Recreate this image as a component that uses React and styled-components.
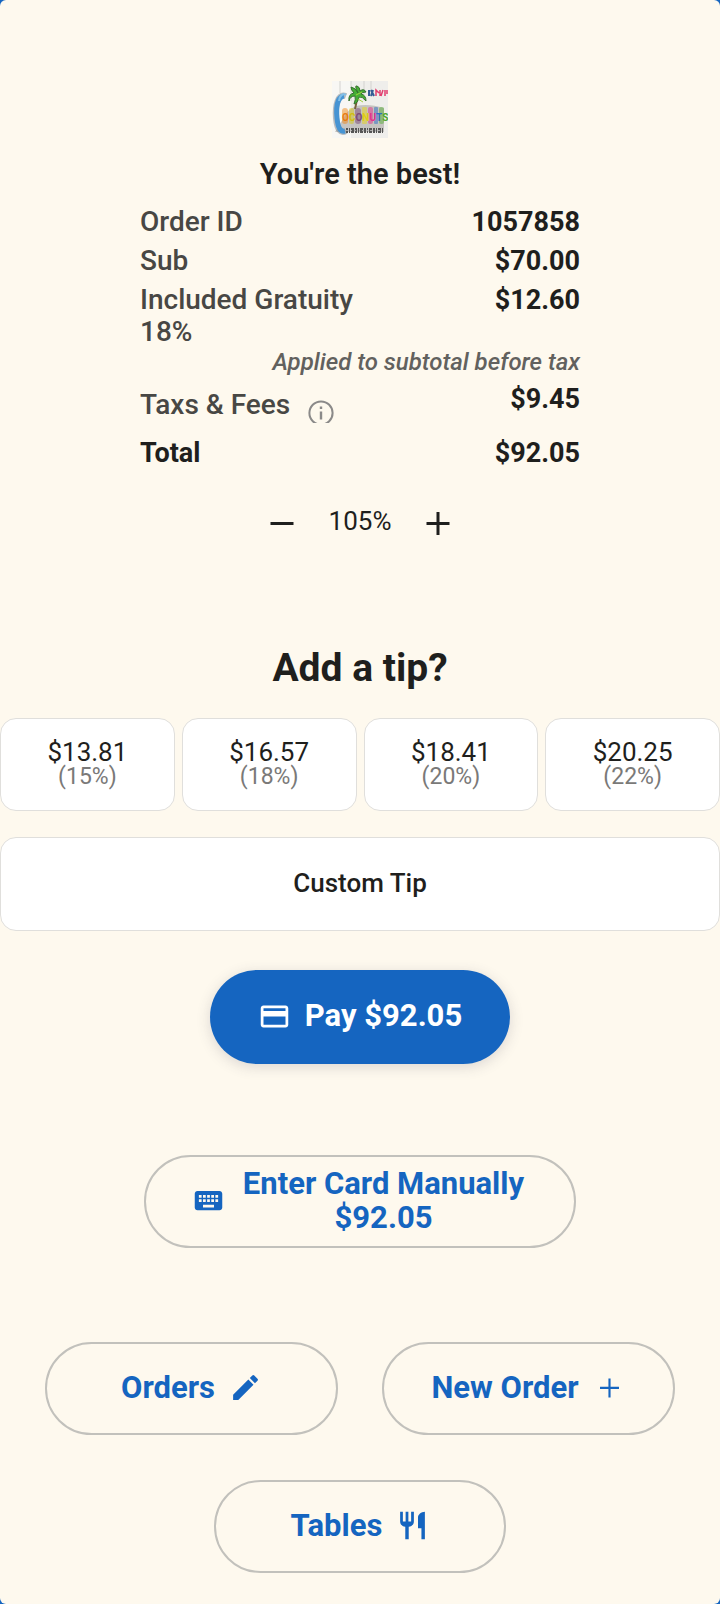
import React, { useState } from 'react';
import styled, { createGlobalStyle } from 'styled-components';
import { MdCreditCard, MdEdit, MdKeyboard, MdRestaurant } from 'react-icons/md';

const GlobalStyle = createGlobalStyle`
  *, *::before, *::after {
    box-sizing: border-box;
  }

  body {
    margin: 0;
    background: #1565c0;
    font-family: Roboto, 'Liberation Sans', sans-serif;
    color: #1f1f1d;
  }

  button {
    font-family: inherit;
    color: inherit;
    cursor: pointer;
  }
`;

const Page = styled.main`
  display: flex;
  flex-direction: column;
  align-items: center;
  padding: 81px 0 31px;
  border-radius: 6px;
  background: #fef9ee;
`;

const LogoImage = styled.svg`
  display: block;
  width: 56px;
  height: 57px;
`;

const Thanks = styled.h1`
  margin: 18px 0 14px;
  font-size: 29px;
  line-height: 36px;
  font-weight: 600;
`;

const Summary = styled.dl`
  width: 440px;
  max-width: 100%;
  margin: 0;
`;

const Row = styled.div`
  display: flex;
  justify-content: space-between;
  align-items: flex-start;
  margin-bottom: ${({ $gap = 7 }) => $gap}px;
  font-size: 27px;
  line-height: 32px;
`;

const Label = styled.dt`
  max-width: 50%;
  font-size: ${({ $strong }) => ($strong ? 27 : 28)}px;
  font-weight: ${({ $strong }) => ($strong ? 700 : 500)};
  color: ${({ $strong }) => ($strong ? '#1f1f1d' : '#484744')};
`;

const InfoLabel = styled(Label)`
  display: flex;
  gap: 16px;
  height: 40px;
  padding-top: 6px;
  overflow: hidden;
`;

const InfoButton = styled.button`
  flex: none;
  height: 40px;
  padding: 8px 0 0;
  border: 0;
  background: none;
  color: #8b8a89;

  svg {
    display: block;
  }
`;

const Value = styled.dd`
  margin: 0;
  font-weight: 700;
`;

const Note = styled.dd`
  margin: 0 0 7px;
  font-size: 24px;
  line-height: 28px;
  font-style: italic;
  font-weight: 500;
  text-align: right;
  color: #62615e;
`;

const Stepper = styled.div`
  display: flex;
  align-items: center;
  gap: 27px;
  margin-top: 27px;
`;

const StepButton = styled.button`
  display: flex;
  padding: 0;
  border: 0;
  background: none;
`;

const Percent = styled.output`
  padding-bottom: 4px;
  font-size: 26px;
  line-height: 32px;
`;

const TipTitle = styled.h2`
  margin: 101px 0 26px;
  font-size: 39px;
  line-height: 48px;
  font-weight: 700;
`;

const TipGrid = styled.div`
  display: grid;
  grid-template-columns: repeat(4, 1fr);
  gap: 26px 7px;
  width: 100%;
`;

const TipButton = styled.button`
  display: flex;
  flex-direction: column;
  align-items: center;
  justify-content: center;
  grid-column: ${({ $wide }) => ($wide ? '1 / -1' : 'auto')};
  height: ${({ $wide }) => ($wide ? 94 : 93)}px;
  padding: 0 0 2px;
  border: 1px solid #e0dfdc;
  border-radius: 16px;
  background: #fff;
  font-size: 26px;
  line-height: 26px;
  font-weight: ${({ $wide }) => ($wide ? 500 : 400)};
`;

const TipPercent = styled.span`
  font-size: 23px;
  line-height: 24px;
  color: #7a7978;
`;

const Pill = styled.button`
  display: flex;
  align-items: center;
  justify-content: center;
  gap: 14px;
  min-height: 93px;
  padding: 0 46px 2px;
  border: 2px solid #c2c1bc;
  border-radius: 47px;
  background: none;
  color: #1565c0;
  font-size: 31px;
  line-height: 34px;
  font-weight: 700;

  svg {
    flex: none;
  }
`;

const PayButton = styled(Pill)`
  width: 300px;
  min-height: 94px;
  margin-top: 39px;
  border: 0;
  background: #1565c0;
  color: #fff;
  box-shadow: 0 3px 14px rgba(60, 60, 90, 0.18);
`;

const ManualButton = styled(Pill)`
  width: 432px;
  max-width: 100%;
  margin-top: 91px;
`;

const NavGrid = styled.nav`
  display: grid;
  grid-template-columns: 1fr 1fr;
  gap: 44px;
  width: 100%;
  margin: 94px 0 45px;
  padding: 0 45px;
`;

const TablesButton = styled(Pill)`
  width: 292px;
`;

const LOGO_LETTERS = [
  { char: 'O', fill: '#e87c12' },
  { char: 'C', fill: '#d0bd12' },
  { char: 'O', fill: '#7d4a78' },
  { char: 'N', fill: '#e0cb14' },
  { char: 'U', fill: '#e2338a' },
  { char: 'T', fill: '#2f6fc4' },
  { char: 'S', fill: '#4ea62f' },
];

const TIPS = [
  { amount: '$13.81', percent: 15 },
  { amount: '$16.57', percent: 18 },
  { amount: '$18.41', percent: 20 },
  { amount: '$20.25', percent: 22 },
];

const Logo = () => (
  <LogoImage viewBox="0 0 56 57" role="img" aria-label="Coconuts">
    <rect width="56" height="57" fill="#efeeeb" />
    <path d="M0 0h19v57H0z" fill="#f8f7f4" />
    <path d="M19 0v20M32 0v14M39 0v16M8 0v12" stroke="#d3d2cf" strokeWidth="1" />
    <path d="M3 51h49V27q-16-5-28-2-8 4-10 8z" fill="#b3b1ae" opacity="0.7" />
    {/* big wave-shaped C */}
    <path
      d="M14 15C6 12 3 24 4 37c1 12 5 16 10 13"
      fill="none"
      stroke="#777f88"
      strokeWidth="6"
      opacity="0.5"
    />
    <path
      d="M12 15C5 16 4 27 5 37c1 11 4 14 8 13"
      fill="none"
      stroke="#4794d3"
      strokeWidth="5"
    />
    <path d="M7 20c0-5 4-8 7-6" fill="none" stroke="#81bfe9" strokeWidth="2" />
    {/* palm */}
    <path d="M26 12q-1 8-3 16" stroke="#76613d" strokeWidth="2" fill="none" />
    <path
      d="M26 12q-4-8-1-7 3 1 3 5 4-3 6 1-4 0-5 2 5 1 5 7-4-5-7-4-1 6-5 7 2-5 1-8-5 0-6 5-1-7 5-8-3-3-3-6 5 1 7 6z"
      fill="#45ae34"
      stroke="#35702e"
      strokeWidth="1"
    />
    <path d="M24 14l6-3M26 18l5 3" stroke="#a2d23f" strokeWidth="1" />
    {/* colour glow behind the name */}
    <g opacity="0.5">
      <rect x="10" y="27" width="6" height="16" rx="3" fill="#f08a1c" />
      <rect x="17" y="27" width="5" height="16" rx="2" fill="#d9c91d" />
      <rect x="23" y="27" width="6" height="16" rx="3" fill="#7d4a78" />
      <rect x="30" y="26" width="5" height="17" rx="1" fill="#e8d31c" />
      <rect x="36" y="26" width="5" height="17" rx="2" fill="#e2338a" />
      <rect x="42" y="26" width="4" height="17" rx="1" fill="#2f6fc4" />
      <rect x="47" y="26" width="5" height="17" rx="2" fill="#59b03a" />
    </g>
    <text
      x="10"
      y="40"
      fontFamily="Roboto, sans-serif"
      fontSize="10"
      fontWeight="700"
    >
      {LOGO_LETTERS.map(({ char, fill }, i) => (
        <tspan key={i} fill={fill}>{char}</tspan>
      ))}
    </text>
    {/* small lettering, too fine to read at this size */}
    <path d="M37 9v6M39 9l3 6M39 15l2-6" stroke="#345c95" strokeWidth="2" />
    <path
      d="M44 15V9l3 3M48 9v6M51 9l-2 6M53 9v6M55 9v4"
      fill="none"
      stroke="#e23e6f"
      strokeWidth="1.5"
    />
    <path d="M14 49.5h37" stroke="#555" strokeWidth="5" strokeDasharray="2 1 1 1 3 1" />
    <path d="M14 49.5h37" stroke="#aaa" strokeWidth="1" strokeDasharray="2 3 1 2" />
  </LogoImage>
);

const InfoIcon = () => (
  <svg width="30" height="30" viewBox="0 0 30 30" fill="none" stroke="currentColor">
    <circle cx="15" cy="15" r="11.6" strokeWidth="2" />
    <path d="M15 13.5v8M15 8.5v2.6" strokeWidth="2.4" />
  </svg>
);

const MinusIcon = () => (
  <svg width="40" height="40" viewBox="0 0 40 40" stroke="currentColor">
    <path d="M8.5 20.5h23" strokeWidth="3" />
  </svg>
);

const PlusIcon = ({ size, thickness }) => (
  <svg
    width={size}
    height={size}
    viewBox="0 0 40 40"
    stroke="currentColor"
    strokeWidth={thickness}
  >
    <path d="M8.5 20.5h23M20 9v23" />
  </svg>
);

const App = () => {
  const [zoom, setZoom] = useState(105);

  return (
    <>
      <GlobalStyle />
      <Page>
        <Logo />
        <Thanks>You're the best!</Thanks>

        <Summary>
          <Row>
            <Label>Order ID</Label>
            <Value>1057858</Value>
          </Row>
          <Row>
            <Label>Sub</Label>
            <Value>$70.00</Value>
          </Row>
          <Row $gap={0}>
            <Label>Included Gratuity 18%</Label>
            <Value>$12.60</Value>
          </Row>
          <Note as="div">Applied to subtotal before tax</Note>
          <Row $gap={14}>
            <InfoLabel>
              Taxs &amp; Fees
              <InfoButton aria-label="About taxes and fees">
                <InfoIcon />
              </InfoButton>
            </InfoLabel>
            <Value>$9.45</Value>
          </Row>
          <Row>
            <Label $strong>Total</Label>
            <Value>$92.05</Value>
          </Row>
        </Summary>

        <Stepper>
          <StepButton aria-label="Decrease" onClick={() => setZoom(zoom - 5)}>
            <MinusIcon />
          </StepButton>
          <Percent>{zoom}%</Percent>
          <StepButton aria-label="Increase" onClick={() => setZoom(zoom + 5)}>
            <PlusIcon size={40} thickness={3} />
          </StepButton>
        </Stepper>

        <TipTitle>Add a tip?</TipTitle>
        <TipGrid>
          {TIPS.map(({ amount, percent }) => (
            <TipButton key={percent}>
              {amount}
              <TipPercent>({percent}%)</TipPercent>
            </TipButton>
          ))}
          <TipButton $wide>Custom Tip</TipButton>
        </TipGrid>

        <PayButton>
          <MdCreditCard size={33} />
          Pay $92.05
        </PayButton>
        <ManualButton>
          <MdKeyboard size={33} />
          <span>Enter Card Manually $92.05</span>
        </ManualButton>

        <NavGrid>
          <Pill>
            Orders
            <MdEdit size={33} />
          </Pill>
          <Pill>
            New Order
            <PlusIcon size={33} thickness={2.6} />
          </Pill>
        </NavGrid>
        <TablesButton>
          Tables
          <MdRestaurant size={33} />
        </TablesButton>
      </Page>
    </>
  );
};

export default App;
